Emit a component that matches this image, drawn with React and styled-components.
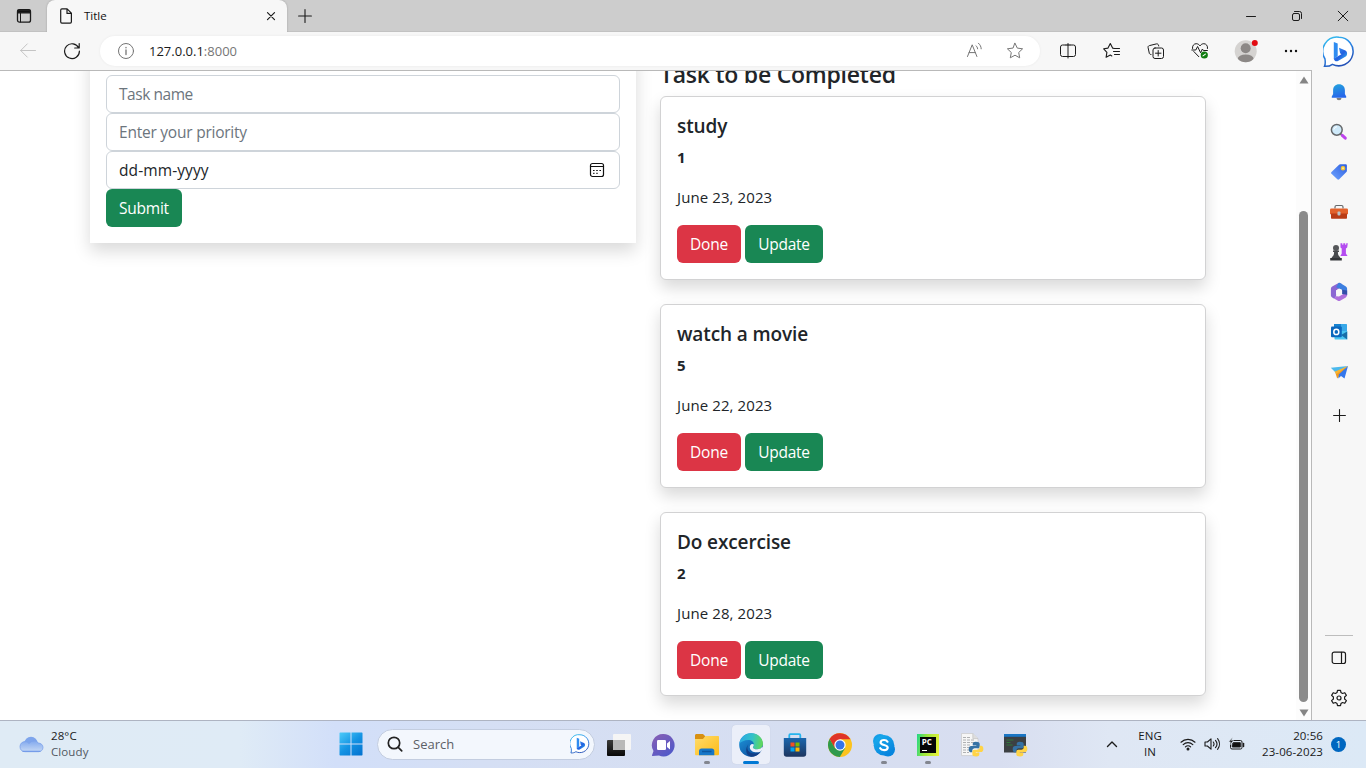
import React from "react";
import styled, { createGlobalStyle } from "styled-components";

const Global = createGlobalStyle`
  * { box-sizing: border-box; }
  html, body { margin: 0; padding: 0; overflow: hidden; background: #fff; }
  body { font-family: "Open Sans", "Noto Sans", sans-serif; color: #212529; }
  svg { display: block; flex: none; }
  h2, h3, p { margin: 0; }
`;

const Screen = styled.div`
  width: 1366px; height: 768px; display: flex; flex-direction: column; overflow: hidden;
`;

/* ---------- window frame ---------- */
const TitleBar = styled.header`
  height: 32px; flex: none; display: flex; background: #cdcdcd;
  box-shadow: inset 0 -1px 0 #c2c2c2;
`;
const TabActions = styled.div`
  width: 47px; display: flex; align-items: center; justify-content: center;
`;
const Tab = styled.div`
  width: 240px; display: flex; align-items: center; padding: 0 9px 0 12px;
  background: #f7f7f7; border-radius: 8px 8px 0 0; font-size: 11.5px; color: #111;
  box-shadow: 0 0 2px rgba(0,0,0,.25);
`;
const TabLabel = styled.span` flex: 1; margin: -2px 0 0 11px; `;
const NewTab = styled.div` width: 36px; display: flex; align-items: center; justify-content: center; `;
const WindowButtons = styled.div` margin-left: auto; display: flex; `;
const WindowButton = styled.div` width: 46px; display: flex; align-items: center; justify-content: center; `;

const Body = styled.div` height: 688px; flex: none; display: flex; `;
const Main = styled.div` width: 1312px; flex: none; display: flex; flex-direction: column; `;
const Toolbar = styled.div`
  height: 38px; flex: none; display: flex; align-items: center; background: #f7f7f7;
`;
const ToolSlot = styled.div`
  width: ${p => p.$w}px; height: 38px; flex: none; display: flex; align-items: center; justify-content: center;
`;
const Address = styled.div`
  width: 940px; height: 30px; flex: none; border-radius: 15px; background: #fff; display: flex; align-items: center;
  padding: 0 16px 0 17px; box-shadow: 0 0 3px rgba(0,0,0,.06);
`;
const Url = styled.span`
  flex: 1; margin-left: 14px; font-size: 13px; color: #1b1b1b; letter-spacing: 0;
  span { color: #767676; }
`;
const AddressIcons = styled.div` display: flex; gap: 22px; align-items: center; `;

const Viewport = styled.div`
  flex: 1; min-height: 0; display: flex; overflow: hidden; background: #fff;
  border-top: 1px solid #b9b9b9; border-right: 1px solid #b9b9b9;
`;
const Page = styled.main`
  width: 1296px; padding-left: 90px; display: flex; align-items: flex-start; gap: 24px;
`;
const ScrollTrack = styled.div`
  width: 15px; background: #fcfcfc; display: flex; flex-direction: column; align-items: center;
  padding: 5px 0 3px;
`;
const ScrollThumb = styled.div`
  width: 9px; height: 491px; margin: 127px 0 auto; border-radius: 5px; background: #8b8b8b;
`;

/* ---------- page ---------- */
const FormCard = styled.form`
  width: 546px; margin-top: -20px; padding: 24px 16px 16px; background: #fff;
  display: flex; flex-direction: column; align-items: flex-start;
  box-shadow: 0 8px 16px rgba(0,0,0,.15);
`;
const Field = styled.div`
  width: 100%; height: 38px; padding: 0 14px 0 12px; border: 1px solid #ced4da; border-radius: 6px;
  display: flex; align-items: center; justify-content: space-between;
  font-size: 15.5px; letter-spacing: ${p => p.$ls || 0}px; color: ${p => (p.$value ? "#212529" : "#6c757d")};
`;
const Button = styled.button`
  width: ${p => p.$w}px; height: 38px; padding: 0; border: 0; border-radius: 6px;
  background: ${p => (p.$danger ? "#dc3545" : "#198754")}; color: #fff;
  font: 15.5px "Open Sans", sans-serif; letter-spacing: -0.25px;
`;
const Tasks = styled.section` width: 546px; margin-top: -11px; `;
const Heading = styled.h2`
  height: 28px; line-height: 29px; margin-bottom: 8px; font-size: 23px; font-weight: 600;
  letter-spacing: -0.24px; white-space: nowrap;
`;
const Card = styled.article`
  height: 184px; margin-bottom: 24px; padding: 16px; background: #fff;
  border: 1px solid #d2d2d3; border-radius: 6px; box-shadow: 0 8px 16px rgba(0,0,0,.15);
`;
const CardTitle = styled.h3`
  height: 24px; line-height: 27px; margin-bottom: 8px; font-size: 19px; font-weight: 600;
  letter-spacing: -0.12px;
`;
const CardText = styled.p`
  height: 24px; line-height: ${p => (p.$bold ? 24 : 25)}px; margin-bottom: 16px; font-size: 15px;
  font-weight: ${p => (p.$bold ? 700 : 400)}; letter-spacing: ${p => (p.$bold ? 0 : 0.1)}px;
`;
const Actions = styled.div` display: flex; gap: 4px; `;

/* ---------- sidebar ---------- */
const Sidebar = styled.aside`
  width: 54px; background: #f7f7f7; display: flex; flex-direction: column; align-items: center;
  padding-bottom: 2px;
`;
const SideItem = styled.div`
  width: 40px; height: ${p => p.$h || 40}px; flex: none; display: flex; align-items: center; justify-content: center;
`;
const SideRule = styled.div` width: 28px; height: 1px; margin: auto 0 2px; background: #bdbdbd; `;

/* ---------- taskbar ---------- */
const Taskbar = styled.footer`
  height: 48px; flex: none; display: flex; align-items: center; padding-bottom: 1px; border-top: 1px solid #aeb4c2;
  background: linear-gradient(90deg, #dfebf5 0, #dfebf6 240px, #d2dff9 335px, #d5dff4 480px, #d6def1 800px, #d8def0 1000px, #dfe7f4 1110px, #dce9f6 1366px);
`;
const Weather = styled.div` width: 329px; flex: none; padding-left: 19px; display: flex; align-items: center; gap: 7px; `;
const Lines = styled.div`
  display: flex; flex-direction: column; font-size: 11.5px; line-height: 16px; color: #1a1a1a;
  text-align: ${p => p.$align || "left"}; width: ${p => p.$w || "auto"}; white-space: nowrap;
`;
const Line = styled.span` color: ${p => (p.$dim ? "#51585f" : "inherit")}; letter-spacing: 0.1px; `;
const Search = styled.div`
  width: 218px; height: 31px; flex: none; margin: 0 2px 0 4px; padding: 0 4px 0 9px; border-radius: 16px;
  display: flex; align-items: center; background: #f3f7fd; border: 1px solid #c3cde0;
`;
const SearchText = styled.span` flex: 1; margin-left: 10px; font-size: 13px; color: #5c6066; `;
const TaskbarSlot = styled.div`
  width: ${p => p.$w || 44.1}px; height: 46px; flex: none; display: flex; align-items: center; justify-content: center;
`;
const Tile = styled.div`
  width: 38px; height: 39px; border-radius: 4px; display: flex; flex-direction: column;
  align-items: center; justify-content: flex-end; background: ${p => (p.$active ? "#ebeff9" : "transparent")};
  box-shadow: ${p => (p.$active ? "0 0 1px #b9c0d4" : "none")};
`;
const Indicator = styled.i`
  width: ${p => (p.$active ? 16 : 6)}px; height: 3px; margin-top: 4px; border-radius: 2px;
  background: ${p => (p.$active ? "#0078d4" : p.$open ? "#82868f" : "transparent")};
`;
const Tray = styled.div` margin-left: auto; display: flex; align-items: center; padding-right: 20px; `;
const TraySlot = styled.div` width: ${p => p.$w}px; display: flex; justify-content: center; `;
const Badge = styled.div`
  width: 15px; height: 15px; margin-left: 8px; border-radius: 50%; background: #0067c0; color: #fff;
  font-size: 9.5px; line-height: 15px; text-align: center;
`;

/* ---------- icons ---------- */
const Svg = ({ s = 16, w, h, vb, c = "#1b1b1b", sw = 1, children }) => (
  <svg width={w || s} height={h || s} viewBox={vb || `0 0 ${w || s} ${h || s}`} fill="none"
    stroke={c} strokeWidth={sw} strokeLinecap="round" strokeLinejoin="round">{children}</svg>
);
const Plus = ({ s = 14 }) => <Svg s={s} sw={1.1}><path d={`M${s / 2} .6V${s - .6}M.6 ${s / 2}H${s - .6}`} /></Svg>;
const Dots = () => <Svg s={16}><g fill="#111" stroke="none"><circle cx="3" cy="8" r="1.2" /><circle cx="8" cy="8" r="1.2" /><circle cx="13" cy="8" r="1.2" /></g></Svg>;
const STAR = "M9 1.3l2.3 4.8 5.3.7-3.9 3.7 1 5.3L9 13.2l-4.7 2.6 1-5.3L1.4 6.8l5.3-.7z";

const BingIcon = ({ s, id }) => (
  <svg width={s} height={s} viewBox="0 0 32 32">
    <defs>
      <linearGradient id={id + "r"} x1="0" y1="0" x2=".5" y2="1"><stop stopColor="#35c8ee" /><stop offset=".5" stopColor="#2b8ae8" /><stop offset="1" stopColor="#2452b8" /></linearGradient>
      <linearGradient id={id + "b"} x1="0" y1="0" x2="1" y2="1"><stop stopColor="#3aa0f6" /><stop offset=".55" stopColor="#2260e0" /><stop offset="1" stopColor="#35c9f1" /></linearGradient>
    </defs>
    <path d="M16 1.2a14.3 14.3 0 1 1-6.6 27.1c-2 1.500-4.600 2.200-7.900 2 .9-1.900.9-4.400.5-7.300A14.300 14.300 0 0 1 16 1.200z" fill="#fff" stroke={`url(#${id}r)`} strokeWidth="1.500" />
    <path d="M10.800 6l3.900 1.400v12.500l-3.900 3.100z" fill="#2f8cf0" />
    <path d="M16 11.700l6.400 2.700c2.200 1 2.300 4.800.3 6.100l-7.700 4.600c-2.300.8-4.200-.8-4.200-2.700l7.600-4.200-1.300-1z" fill={`url(#${id}b)`} />
  </svg>
);

const Bell = () => (
  <svg width="16" height="18" viewBox="0 0 16 18">
    <defs><linearGradient id="bell" x1="0" y1="0" x2=".3" y2="1"><stop stopColor="#23a6dc" /><stop offset="1" stopColor="#2767ea" /></linearGradient></defs>
    <path d="M5.500 15h5a2.500 2.200 0 0 1-5 0z" fill="#7d7d80" />
    <path d="M8 1.300c3.600 0 5.900 2.500 5.900 5.900v3.700l1.300 2.600c.3.700 0 1.300-.7 1.300h-13c-.7 0-1-.6-.7-1.300l1.300-2.600V7.200C2.100 3.800 4.400 1.300 8 1.300z" fill="url(#bell)" />
  </svg>
);
const Magnifier = () => (
  <svg width="18" height="18" viewBox="0 0 18 18">
    <path d="M10.500 10.800l2 2" stroke="#777" strokeWidth="2" />
    <path d="M12.300 12.400l3 2.800" stroke="#bd43ec" strokeWidth="3" strokeLinecap="round" />
    <circle cx="6.800" cy="6.800" r="5.400" fill="#cfeafa" stroke="#65686b" strokeWidth="1.500" />
    <path d="M3.800 6.500A3.600 3.600 0 0 1 7 3.700" stroke="#fff" fill="none" />
  </svg>
);
const Tag = () => (
  <svg width="18" height="18" viewBox="0 0 18 18">
    <defs><linearGradient id="tag" x1="1" y1="0" x2="0" y2="1"><stop stopColor="#2e5fe0" /><stop offset="1" stopColor="#6fa4ff" /></linearGradient></defs>
    <path d="M10.200 1.300h5.500a1.200 1.200 0 0 1 1.200 1.200v5.200c0 .5-.2.900-.5 1.200l-7.200 7.300c-.6.600-1.300.6-1.900 0L1.500 10.800c-.6-.6-.6-1.300 0-1.900l7.300-7c.4-.4.900-.6 1.400-.6z" fill="url(#tag)" />
    <circle cx="13" cy="5.300" r="1.700" fill="#f9e59a" stroke="#f3c32e" strokeWidth="1.200" />
  </svg>
);
const Toolbox = () => (
  <svg width="20" height="16" viewBox="0 0 20 16">
    <path d="M6 4.500V3C6 2 6.600 1.500 7.400 1.500h5.200c.8 0 1.400.5 1.400 1.400v1.600" fill="none" stroke="#66696c" strokeWidth="1.200" />
    <rect x="1" y="4.500" width="18" height="6" rx="1.300" fill="#e2612b" />
    <path d="M2 9.600h16v4.100c0 .7-.4 1-1 1H3c-.6 0-1-.3-1-1z" fill="#b93c16" />
    <rect x="8.500" y="7.500" width="3" height="4" rx="1" fill="#b9c4c8" />
  </svg>
);
const Chess = () => (
  <svg width="20" height="20" viewBox="0 0 20 20">
    <path d="M11.500 1.200h1.800v1.600h1V1.200h1.900v1.600h1V1.200h1.600l-.6 4.300-1.300 1v5l1.700 2.600h-7.200l1.300-2.600v-5l-1.200-1z" fill="#b44cf0" />
    <circle cx="7" cy="6" r="3" fill="#55575a" />
    <path d="M4 8.600h6v1.500H8.900c0 2.600.7 4 2.300 5.200v1.200H2.800v-1.200c1.600-1.200 2.300-2.600 2.300-5.200H4z" fill="#484a4d" />
    <path d="M1.200 16h11.600v2.500H1.200z" fill="#333538" />
  </svg>
);
const Office = () => (
  <svg width="18" height="20" viewBox="0 0 18 20">
    <path d="M8.500 1L2.200 4.600C1.300 5.200.9 6 .9 7v6.300c0 1 .5 1.800 1.300 2.300l2 1.100 1.900-2.400V8.400l5.500-3.700V1.800z" fill="#8b67d3" />
    <path d="M8.500 1c.6-.3 1.200-.2 1.700.1l5.700 3.400c.8.5 1.200 1.200 1.200 2.100v6.600l-5-1.500V7.700L6.100 5.200z" fill="#3d7fe0" />
    <path d="M17.100 8.500v4.600c0 1-.5 1.800-1.300 2.300l-5.700 3.400c-.7.400-1.500.4-2.200 0l-3.800-2.200 2.100-2.300 2.800.2 5.500-3.200z" fill="#ae70dc" />
    <path d="M12.100 7.700l5 .8v4.300l-5-.8z" fill="#334fa9" />
    <path d="M9 6.800l3.100 1.800v3.200L9 13.600l-3-1.800V8.600z" fill="#f7f7f7" />
  </svg>
);
const Outlook = () => (
  <svg width="18" height="18" viewBox="0 0 18 18">
    <path d="M4 1h12c.6 0 1 .4 1 1v8H4z" fill="#38a8e8" /><path d="M4 1h7v5H4z" fill="#1682cf" />
    <path d="M4.500 8H17.200v8.500H5.500c-.6 0-1-.4-1-1z" fill="#48c4f1" />
    <path d="M17.200 8.600v7.900L11 12z" fill="#166da8" />
    <rect x="1" y="3.500" width="10.800" height="10.800" rx="1" fill="#0a67bd" />
    <ellipse cx="6.300" cy="8.900" rx="2.500" ry="2.700" fill="none" stroke="#fff" strokeWidth="1.500" />
  </svg>
);
const Plane = () => (
  <svg width="19" height="15" viewBox="0 0 19 15">
    <path d="M.8 2.700L18 1 5.600 7.500z" fill="#4bb9ec" /><path d="M5.300 7.400L18 1 7.200 13.400z" fill="#f09a22" />
    <path d="M4.500 6.700L18 1 6.600 9z" fill="#f8b532" /><path d="M8.900 9.300L18 1l-3.500 12.600-3.500-2.500-2.700 2.500z" fill="#3477ec" />
  </svg>
);
const SideToggle = () => <Svg w={16} h={14} sw={1.200}><rect x="1.200" y="1.200" width="13.300" height="11.300" rx="2" /><path d="M10.500 1.300v11" /></Svg>;
const Gear = () => (
  <Svg s={18} sw={1.200}>
    <path d="M7.500 1.300h3l.5 2.300 1.500.9 2.300-.8 1.600 2.700-1.800 1.600v2l1.800 1.600-1.600 2.700-2.300-.8-1.500.9-.5 2.300h-3L7 14.400l-1.500-.9-2.300.8-1.600-2.700L3.400 10V8L1.600 6.400l1.600-2.700 2.300.8L7 3.600z" />
    <circle cx="9" cy="9" r="2" />
  </Svg>
);
const Avatar = () => (
  <svg width="24" height="24" viewBox="0 0 24 24">
    <defs><clipPath id="av"><circle cx="11.700" cy="12.300" r="11" /></clipPath></defs>
    <g clipPath="url(#av)"><rect width="24" height="24" fill="#d5d3d1" /><circle cx="11.700" cy="9.300" r="5" fill="#8c8886" /><ellipse cx="11.700" cy="20" rx="8" ry="4.500" fill="#8c8886" /></g>
    <circle cx="20.800" cy="4" r="3" fill="#e30b12" />
  </svg>
);
const Heart = () => (
  <Svg s={18}>
    <path d="M1.500 6.500C1 3.800 3 1.700 5.200 1.700c1.600 0 2.800.8 3.800 2.200 1-1.400 2.200-2.200 3.800-2.200 2.300 0 4.200 2.100 3.700 4.800M2.800 9.500l5 5.200M.8 8h4L6.600 4.500l3 6.300L11.400 7l1 1.500h4" />
    <circle cx="13.300" cy="13" r="3.600" fill="#107c10" stroke="none" /><path d="M12 13.900l2.400-1.800" stroke="#fff" strokeWidth="1.100" />
  </Svg>
);

const Cloud = () => (
  <svg width="25" height="17" viewBox="0 0 25 17">
    <defs><linearGradient id="cl" x1="0" y1="0" x2="0" y2="1"><stop stopColor="#82a9ee" /><stop offset="1" stopColor="#c6d9f5" /></linearGradient></defs>
    <circle cx="12" cy="7.500" r="6.700" fill="#7ea5ec" />
    <path d="M6 5.600c2 0 3 .8 4 2 1.200-1.800 3.200-2.700 5.200-2.700C17 4.900 18.500 5.700 19 7c3 0 5 2 5 4.400 0 2.500-2 4.300-4.500 4.300H6c-3 0-5-2-5-5s2.200-5.100 5-5.100z" fill="url(#cl)" stroke="#7da2ea" strokeWidth=".8" />
    <path d="M3.500 15.300h18" stroke="#6f98e8" strokeWidth="1.100" />
  </svg>
);
const Windows = () => (
  <svg width="24" height="24" viewBox="0 0 24 24">
    <defs><linearGradient id="wn" gradientUnits="userSpaceOnUse" x1="0" y1="0" x2="20" y2="24"><stop stopColor="#4fcdfa" /><stop offset=".55" stopColor="#1493e3" /><stop offset="1" stopColor="#0575d1" /></linearGradient></defs>
    <path d="M1 .5h10.500v11H.5V1zM12.500.5H23l.5.5v10.500h-11zM.5 12.500h11v11H1l-.5-.5zM12.500 12.500h11V23l-.5.5H12.500z" fill="url(#wn)" />
  </svg>
);
const TaskView = () => (
  <svg width="24" height="24" viewBox="0 0 24 24">
    <defs><linearGradient id="tv" x1="0" y1="0" x2="0" y2="1"><stop stopColor="#3c3c3a" /><stop offset="1" stopColor="#080808" /></linearGradient></defs>
    <rect x="0" y="7" width="18" height="16" rx="1" fill="url(#tv)" /><rect x="6" y="1" width="18" height="16" rx="1" fill="#f5f5f5" />
    <path d="M6 7h12v10H7l-1-1z" fill="#b9b9b8" />
  </svg>
);
const Chat = () => (
  <svg width="24" height="24" viewBox="0 0 24 24">
    <defs><linearGradient id="ch" x1="0" y1="0" x2=".7" y2="1"><stop stopColor="#8a5fb3" /><stop offset="1" stopColor="#5059c9" /></linearGradient></defs>
    <path d="M12.500 1A11.200 11.200 0 1 1 8 22.500L1.500 23c-.5 0-.7-.4-.5-.8l1.500-4.200A11.200 11.200 0 0 1 12.500 1z" fill="url(#ch)" />
    <rect x="6" y="7" width="9" height="10" rx="1.200" fill="#fff" /><path d="M16 10.500L19 8v8.500l-3-2.500z" fill="#fff" />
  </svg>
);
const Explorer = () => (
  <svg width="24" height="24" viewBox="0 0 24 24">
    <defs><linearGradient id="ex" x1="0" y1="0" x2="1" y2="1"><stop stopColor="#ffdc6b" /><stop offset="1" stopColor="#fdbb17" /></linearGradient></defs>
    <path d="M0 2.500C0 1.700.6 1 1.500 1H8l2.500 2.500L8 7H0z" fill="#d89012" />
    <path d="M0 6h8l2.500-3H23c.6 0 1 .4 1 1v17c0 .8-.5 1.300-1.300 1.300H1.300C.5 22.300 0 21.800 0 21z" fill="url(#ex)" />
    <path d="M4 22.300V18c0-1.500 1-2.500 2.500-2.500h10.300c1.500 0 2.500 1 2.500 2.500v4.300z" fill="#1677c8" /><path d="M7 18.500h9.500" stroke="#0b57a0" strokeWidth="1.500" />
  </svg>
);
const Edge = () => (
  <svg width="24" height="24" viewBox="0 0 24 24">
    <defs>
      <linearGradient id="ea" x1="0" y1=".3" x2="1" y2=".4"><stop stopColor="#2ba7e4" /><stop offset=".55" stopColor="#32c2c8" /><stop offset="1" stopColor="#62d957" /></linearGradient>
      <linearGradient id="eb" x1="0" y1="0" x2=".7" y2="1"><stop stopColor="#1f9bdf" /><stop offset="1" stopColor="#0d4f9e" /></linearGradient>
    </defs>
    <circle cx="12" cy="12" r="11.800" fill="url(#eb)" />
    <path d="M.3 10.800C1.200 4.600 6 .2 12 .2c7.200 0 11.900 5 11.900 10.300 0 3.500-2.600 5.800-5.700 5.800-2.700 0-4.300-1.100-4.300-2.100 0-.7 1-.9 1-2.700 0-2.400-2.300-4.500-5.700-4.500C5.300 7 1.800 8.800.3 10.800z" fill="url(#ea)" />
    <path d="M9.300 11.300c-2.700 4.700.6 9.500 6.200 9.300 2.800-.1 4.900-1.100 6.300-2.200-2.300 3.700-6 5.500-9.600 5.400-5.600-1-6.200-8.500-2.900-12.500z" fill="#123f86" />
    <path d="M14.900 11.500c0 1.800-1 2-1 2.700 0 1 1.600 2.100 4.300 2.100 2.200 0 3.700-.8 4.800-2.200l1 .6c-.4 1.500-1.200 3-2.200 3.700-4.500 2.200-10.800.6-11-4.200 0-2.500 1.900-4.200 4.100-2.700z" fill="#edf1fa" />
  </svg>
);
const Store = () => (
  <svg width="24" height="24" viewBox="0 0 24 24">
    <defs><linearGradient id="st" x1="0" y1="0" x2="0" y2="1"><stop stopColor="#1b66ad" /><stop offset="1" stopColor="#1d355f" /></linearGradient></defs>
    <path d="M6.300 5.500V2.300c0-.7.400-1.100 1-1.100h9c.6 0 1 .4 1 1.100v3.200" fill="none" stroke="#25b4ee" strokeWidth="1.800" />
    <path d="M.8 5h22.400v16c0 1.700-1 2.700-2.700 2.700h-17C1.800 23.700.8 22.700.8 21z" fill="url(#st)" />
    <path d="M7.500 9.500h4v4h-4z" fill="#f25022" /><path d="M12.500 9.500h4v4h-4z" fill="#7fba00" /><path d="M7.500 14.500h4v4h-4z" fill="#00a4ef" /><path d="M12.500 14.500h4v4h-4z" fill="#ffb900" />
  </svg>
);
const Chrome = () => (
  <svg width="24" height="24" viewBox="0 0 24 24">
    <circle cx="12" cy="12" r="12" fill="#fcc31e" />
    <path d="M1.600 6A12 12 0 0 1 22.400 6.300H12l-5.200 9z" fill="#df3328" />
    <path d="M1.600 6A12 12 0 0 0 11.800 24l5.400-9H6.800z" fill="#2f9a4c" />
    <circle cx="12" cy="12" r="5.700" fill="#fff" /><circle cx="12" cy="12" r="4.500" fill="#3575e8" />
  </svg>
);
const Skype = () => (
  <svg width="24" height="24" viewBox="0 0 24 24">
    <defs><linearGradient id="sk" x1="0" y1="0" x2=".7" y2="1"><stop stopColor="#1bb1ee" /><stop offset="1" stopColor="#0782dd" /></linearGradient></defs>
    <circle cx="8" cy="8" r="7" fill="#159fe8" /><circle cx="16" cy="16.500" r="7" fill="#0686df" /><circle cx="12" cy="12.300" r="10.300" fill="url(#sk)" />
    <path d="M15.500 8.700C14.800 7.500 13.500 7 12 7c-2 0-3.400 1-3.400 2.500 0 3.200 7.100 1.700 7.100 5 0 1.600-1.600 2.600-3.600 2.600-1.700 0-3.200-.6-3.900-1.900" fill="none" stroke="#fff" strokeWidth="2.200" strokeLinecap="round" />
  </svg>
);
const PcBox = styled.div`
  width: 22px; height: 22px; margin-bottom: 1px; padding: 3px; background: linear-gradient(100deg, #20d789, #9be63c 40%, #eef23b);
`;
const PcInner = styled.div`
  width: 16px; height: 16px; padding-left: 2px; background: #050505; color: #fff; font: 700 8px/10px "Open Sans", sans-serif;
  &::after { content: ""; display: block; width: 5px; height: 1px; margin-top: 3px; background: #fff; }
`;
const PyMark = () => (
  <g transform="translate(8.500 8.500) scale(.94)">
    <path d="M7.800.2C5 .2 4.500 1.400 4.500 2.600v1.700h3.800v.6H2.900C1.200 4.900.2 6.200.2 8.200s1 3.300 2.400 3.300h1.500V9.700c0-1.400 1.100-2.400 2.500-2.400h3.300c1.200 0 2-.9 2-2V2.600C11.900 1 10.500.2 7.800.2z" fill="#3572a5" />
    <path d="M8.200 15.900c2.800 0 3.300-1.200 3.300-2.400v-1.700H7.700v-.6h5.400c1.700 0 2.700-1.300 2.700-3.300s-1-3.300-2.400-3.300h-1.500v1.800c0 1.400-1.100 2.400-2.500 2.400H6.100c-1.200 0-2 .9-2 2v2.700c0 1.600 1.400 2.400 4.100 2.400z" fill="#ffd447" />
  </g>
);
const PyDoc = () => (
  <svg width="24" height="24" viewBox="0 0 24 24">
    <path d="M1.500.5h11.300L18 5.600v17H1.500z" fill="#f6f6f6" stroke="#c9c9c9" strokeWidth=".7" /><path d="M12.800.5V5.600H18" fill="#ddd" stroke="#bbb" strokeWidth=".6" />
    <path d="M3 4.500h8M3 7h12M3 9.500h12M3 12h8M3 14.500h6M3 17h6M3 19.500h6" stroke="#a7a9ab" strokeWidth=".9" strokeDasharray="3 1" /><PyMark />
  </svg>
);
const PyTerm = () => (
  <svg width="24" height="24" viewBox="0 0 24 24">
    <rect x="0" y="1" width="22" height="18.500" fill="#3c4043" /><rect x="0" y="1" width="22" height="2.800" fill="#1a76c4" />
    <path d="M2.500 7h7M2.500 9.500h4M2.500 12h6" stroke="#31773d" strokeWidth="1.200" /><PyMark />
  </svg>
);

const apps = [
  { el: <TaskView /> }, { el: <Chat /> }, { el: <Explorer />, open: true }, { el: <Edge />, active: true },
  { el: <Store /> }, { el: <Chrome /> }, { el: <Skype />, open: true },
  { el: <PcBox><PcInner>PC</PcInner></PcBox>, open: true }, { el: <PyDoc /> }, { el: <PyTerm /> },
];
const tasks = [
  { name: "study", priority: 1, date: "June 23, 2023" },
  { name: "watch a movie", priority: 5, date: "June 22, 2023" },
  { name: "Do excercise", priority: 2, date: "June 28, 2023" },
];

export default function App() {
  return (
    <Screen>
      <Global />
      <TitleBar>
        <TabActions>
          <Svg s={16} sw={1.300}><rect x="1.500" y="1.700" width="13" height="12.500" rx="2" /><path d="M2 2.200h12v2.600H2z" fill="#111" /><path d="M4.500 5v9" strokeWidth="1" /></Svg>
        </TabActions>
        <Tab>
          <Svg w={14} h={16} sw={1.200}><path d="M1.700 2.200c0-.8.400-1.300 1.200-1.300h5.200l4.300 4.300v8.600c0 .8-.4 1.300-1.200 1.300H2.900c-.8 0-1.200-.5-1.200-1.300zM8 1v4.400h4.400" /></Svg>
          <TabLabel>Title</TabLabel>
          <Svg s={14} sw={1.200}><path d="M3.500 3.700l7 7M10.500 3.700l-7 7" /></Svg>
        </Tab>
        <NewTab><Plus s={14} /></NewTab>
        <WindowButtons>
          <WindowButton><Svg s={12}><path d="M1.500 6.500h9" /></Svg></WindowButton>
          <WindowButton><Svg s={12}><rect x="1.500" y="3.500" width="7" height="7" rx="1.500" /><path d="M3.500 1.500h5a2 2 0 0 1 2 2v5" /></Svg></WindowButton>
          <WindowButton><Svg s={12}><path d="M1.200 1.200l9.600 9.600M10.800 1.200l-9.600 9.600" /></Svg></WindowButton>
        </WindowButtons>
      </TitleBar>

      <Body>
        <Main>
          <Toolbar>
            <ToolSlot $w={56}><Svg s={18} c="#c4c4c4"><path d="M16.500 8.500H1.700M8.300 1.900L1.700 8.500l6.600 6.600" /></Svg></ToolSlot>
            <ToolSlot $w={32}><Svg s={18} sw={1.200}><path d="M15.700 6A7.400 7.400 0 1 0 16.400 9M16.200 1.500V6h-4.500" /></Svg></ToolSlot>
            <ToolSlot $w={12} />
            <Address>
              <Svg s={18} c="#757575"><circle cx="9" cy="9" r="7.500" /><path d="M9 8v4.500M9 5.500v.3" strokeWidth="1.300" /></Svg>
              <Url>127.0.0.1<span>:8000</span></Url>
              <AddressIcons>
                <Svg w={18} h={18} c="#767676"><path d="M1.500 14.500L6.200 2.800l4.700 11.700M3.100 10.600h6.200M10 3.800c1 .7 1.500 1.700 1.600 3M12.400 1.200c1.800 1.500 2.700 3.400 2.800 5.600" /></Svg>
                <Svg s={18} c="#767676"><path d={STAR} /></Svg>
              </AddressIcons>
            </Address>
            <ToolSlot $w={6} />
            <ToolSlot $w={44}><Svg s={18}><path d="M6.500 3H3.500a2 2 0 0 0-2 2v7.500a2 2 0 0 0 2 2h3M11.500 3h3a2 2 0 0 1 2 2v7.500a2 2 0 0 1-2 2h-3M6.500 3v11.500M11.500 3v11.500" opacity="0" /><path d="M7 3H3.500a2 2 0 0 0-2 2v7.500a2 2 0 0 0 2 2H9M11 3h3.500a2 2 0 0 1 2 2v7.500a2 2 0 0 1-2 2H9M7 3h2M11 3H9" /><path d="M9 1.500v14.500" /></Svg></ToolSlot>
            <ToolSlot $w={44}><Svg s={18} sw={1.100}><path d="M11.500 6.500L9.600 6.100 7.300 1.600 5 6.100l-4.300.7 3.200 3.500-.8 5 4.200-2.200 1.500.8M11.500 6.500h5M10.500 9.500h6M11.500 12.500h5" /></Svg></ToolSlot>
            <ToolSlot $w={44}><Svg s={18}><rect x="6" y="6" width="10.500" height="10.500" rx="2" /><path d="M11.200 8.500v5.500M8.500 11.200H14M4 12.500c-.9 0-1.500-.5-1.700-1.300L1.100 5.700c-.3-1 .3-1.900 1.300-2.100l7-1.700c1-.2 1.800.3 2.100 1.200l.2.900" /></Svg></ToolSlot>
            <ToolSlot $w={44}><Heart /></ToolSlot>
            <ToolSlot $w={48}><Avatar /></ToolSlot>
            <ToolSlot $w={42}><Dots /></ToolSlot>
          </Toolbar>
          <Viewport>
            <Page>
              <FormCard>
                <Field $ls={-0.45}>Task name</Field>
                <Field $ls={-0.23}>Enter your priority</Field>
                <Field $value $ls={0.1}>dd-mm-yyyy
                  <Svg s={16} c="#111" sw={1.200}><rect x="1.500" y="1.500" width="13" height="13" rx="2" /><path d="M1.500 4.500h13" /><path d="M4.500 8.500h.6M7.700 8.500h.6M10.900 8.500h.6M4.500 11.300h.6M7.700 11.300h.6" strokeLinecap="square" strokeWidth="1" /></Svg>
                </Field>
                <Button type="button" $w={76}>Submit</Button>
              </FormCard>
              <Tasks>
                <Heading>Task to be Completed</Heading>
                {tasks.map(t => (
                  <Card key={t.name}>
                    <CardTitle>{t.name}</CardTitle>
                    <CardText $bold>{t.priority}</CardText>
                    <CardText>{t.date}</CardText>
                    <Actions><Button $danger $w={64}>Done</Button><Button $w={78}>Update</Button></Actions>
                  </Card>
                ))}
              </Tasks>
            </Page>
            <ScrollTrack>
              <svg width="10" height="8"><path d="M5 .5L9.500 7.500H.5z" fill="#858585" /></svg>
              <ScrollThumb />
              <svg width="10" height="8"><path d="M5 7.500L9.500.5H.5z" fill="#858585" /></svg>
            </ScrollTrack>
          </Viewport>
        </Main>
        <Sidebar>
          <SideItem $h={40}><BingIcon s={32} id="big" /></SideItem>
          <SideItem><Bell /></SideItem>
          <SideItem><Magnifier /></SideItem>
          <SideItem><Tag /></SideItem>
          <SideItem><Toolbox /></SideItem>
          <SideItem><Chess /></SideItem>
          <SideItem><Office /></SideItem>
          <SideItem><Outlook /></SideItem>
          <SideItem><Plane /></SideItem>
          <SideItem $h={47}><Plus s={13} /></SideItem>
          <SideRule />
          <SideItem><SideToggle /></SideItem>
          <SideItem><Gear /></SideItem>
        </Sidebar>
      </Body>

      <Taskbar>
        <Weather><Cloud /><Lines><Line>28°C</Line><Line $dim>Cloudy</Line></Lines></Weather>
        <TaskbarSlot $w={44}><Windows /></TaskbarSlot>
        <Search>
          <Svg s={16} sw={1.700} c="#222"><circle cx="7" cy="7" r="5.700" /><path d="M11.200 11.300l3.500 3.500" /></Svg>
          <SearchText>Search</SearchText>
          <BingIcon s={20} id="small" />
        </Search>
        {apps.map((a, i) => (
          <TaskbarSlot key={i}><Tile $active={a.active}>{a.el}<Indicator $active={a.active} $open={a.open} /></Tile></TaskbarSlot>
        ))}
        <Tray>
          <TraySlot $w={36}><Svg s={12} sw={1.400}><path d="M1.500 8.500L6 4l4.500 4.500" /></Svg></TraySlot>
          <TraySlot $w={40}><Lines $align="center"><Line>ENG</Line><Line>IN</Line></Lines></TraySlot>
          <TraySlot $w={36}><Svg w={16} h={14} sw={1.200}><path d="M1 5.200a10 10 0 0 1 14 0M3.200 7.600a6.900 6.900 0 0 1 9.600 0M5.400 9.900a3.700 3.700 0 0 1 5.200 0" /><circle cx="8" cy="12" r=".9" fill="#111" /></Svg></TraySlot>
          <TraySlot $w={12}><Svg w={17} h={14} sw={1.100}><path d="M1 5h2.400L7 1.800v10.400L3.400 9H1zM9.300 5a3.400 3.400 0 0 1 0 4M11.500 3.300a5.800 5.800 0 0 1 0 7.400M13.600 1.700a8.500 8.500 0 0 1 0 10.600" /></Svg></TraySlot>
          <TraySlot $w={36}><Svg w={17} h={14}><rect x="2.500" y="3.500" width="11.500" height="8.500" rx="1.500" /><path d="M5.500 5.700h6.800v4.300H4.300V8z" fill="#111" /><path d="M15.500 6.500v3" strokeWidth="1.500" /><path d="M4.500 .3L.8 5h2l-1 3 3.700-4.500h-2z" fill="#111" stroke="#dfe9f5" strokeWidth=".5" /></Svg></TraySlot>
          <Lines $align="right" $w="69px"><Line>20:56</Line><Line>23-06-2023</Line></Lines>
          <Badge>1</Badge>
        </Tray>
      </Taskbar>
    </Screen>
  );
}
